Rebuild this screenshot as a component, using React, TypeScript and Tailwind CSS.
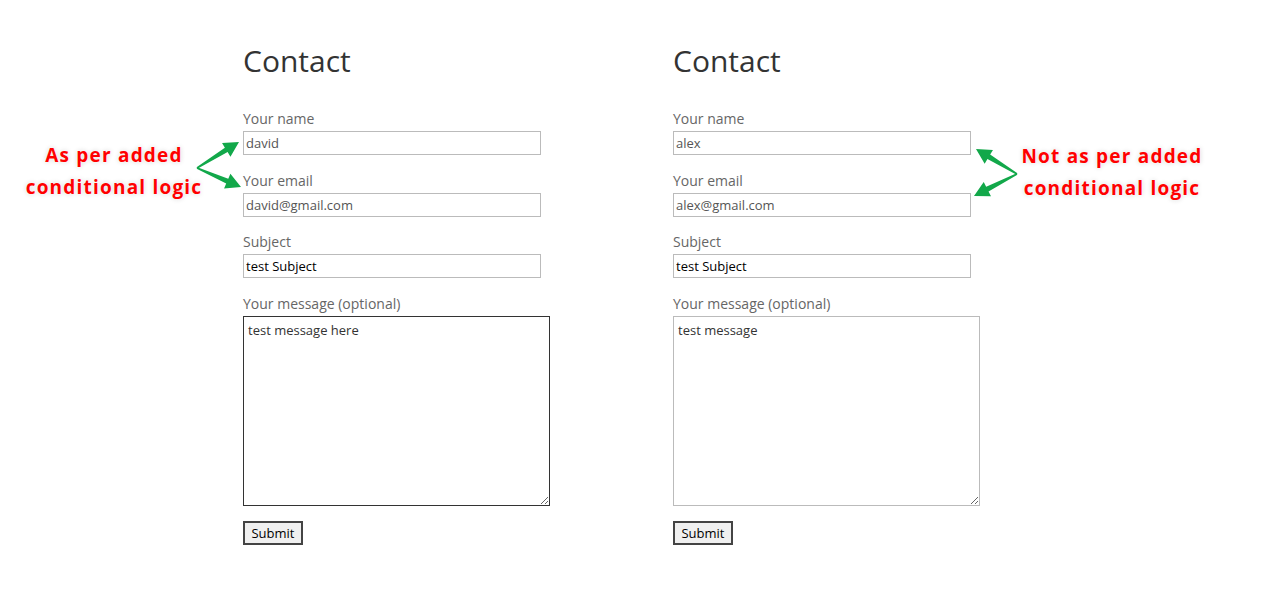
import type { ReactNode } from 'react';

interface FormData {
    name: string;
    email: string;
    subject: string;
    message: string;
    focused?: boolean;
}

const FORMS: FormData[] = [
    { name: 'david', email: 'david@gmail.com', subject: 'test Subject', message: 'test message here', focused: true },
    { name: 'alex', email: 'alex@gmail.com', subject: 'test Subject', message: 'test message' },
];

function Field({ label, children, gap = 'mb-[16px]' }: { label: string; children: ReactNode; gap?: string }) {
    return (
        <div className={`${gap} flex flex-col`}>
            <label className="mb-[2px] h-[20px] text-[14px] leading-[20px] text-[#666]">{label}</label>
            {children}
        </div>
    );
}

function ContactForm({ form }: { form: FormData }) {
    const inputCls = 'h-[24px] w-[298px] border border-[#bbb] bg-white px-[2px] text-[13px] outline-none';
    return (
        <div className="flex w-[307px] flex-col">
            <h1 className="mb-[28px] h-[40px] text-[30px] leading-[40px] text-[#333]">Contact</h1>
            <Field label="Your name">
                <input className={`${inputCls} text-[#555]`} defaultValue={form.name} readOnly />
            </Field>
            <Field label="Your email" gap="mb-[15px]">
                <input className={`${inputCls} text-[#555]`} defaultValue={form.email} readOnly />
            </Field>
            <Field label="Subject">
                <input className={`${inputCls} text-black`} defaultValue={form.subject} readOnly />
            </Field>
            <Field label="Your message (optional)" gap="mb-[15px]">
                <textarea
                    className={`block h-[190px] w-[307px] border bg-white px-[4px] py-[4px] text-[13px] leading-[18px] text-[#333] outline-none ${
                        form.focused ? 'border-[#333]' : 'border-[#bbb]'
                    }`}
                    defaultValue={form.message}
                    readOnly
                />
            </Field>
            <button className="block h-[24px] w-[60px] border-2 border-[#444] bg-[#f0f0f0] text-[13px] leading-[18px] text-black">
                Submit
            </button>
        </div>
    );
}

function Arrow({ from, to }: { from: [number, number]; to: [number, number] }) {
    const [x1, y1] = from;
    const [x2, y2] = to;
    const dx = x2 - x1;
    const dy = y2 - y1;
    const len = Math.hypot(dx, dy);
    const ux = dx / len;
    const uy = dy / len;
    const px = -uy;
    const py = ux;
    const head = 15;
    const half = 8;
    const bx = x2 - ux * head;
    const by = y2 - uy * head;
    const pts = [
        [x1 + px * 0.8, y1 + py * 0.8],
        [bx + px * 2.6, by + py * 2.6],
        [bx + px * half, by + py * half],
        [x2, y2],
        [bx - px * half, by - py * half],
        [bx - px * 2.6, by - py * 2.6],
        [x1 - px * 0.8, y1 - py * 0.8],
    ]
        .map((p) => p.join(','))
        .join(' ');
    return <polygon points={pts} fill="#12a84a" />;
}

function Note({ lines, className }: { lines: string[]; className: string }) {
    return (
        <div
            className={`absolute flex flex-col items-center text-[19px] font-bold leading-[32px] tracking-[1.2px] text-[#ff0000] [font-family:'Open_Sans',sans-serif] [text-shadow:0_0_3px_#fff,0_0_5px_rgba(0,0,0,0.2)] ${className}`}
        >
            {lines.map((l) => (
                <span key={l}>{l}</span>
            ))}
        </div>
    );
}

export default function App() {
    return (
        <div className="relative h-[594px] w-[1269px] overflow-hidden bg-white [font-family:'Open_Sans',sans-serif]">
            <div className="flex gap-[123px] pl-[243px] pt-[41px]">
                {FORMS.map((f) => (
                    <ContactForm key={f.name} form={f} />
                ))}
            </div>

            <Note lines={['As per added', 'conditional logic']} className="left-[14px] top-[139px] w-[200px]" />
            <Note lines={['Not as per added', 'conditional logic']} className="left-[1012px] top-[140px] w-[200px]" />

            <svg className="pointer-events-none absolute left-0 top-0" width="1269" height="594">
                <Arrow from={[197, 168]} to={[239, 142]} />
                <Arrow from={[197, 168]} to={[241, 187]} />
                <Arrow from={[1017, 174]} to={[976, 149]} />
                <Arrow from={[1017, 174]} to={[974, 196]} />
            </svg>
        </div>
    );
}
